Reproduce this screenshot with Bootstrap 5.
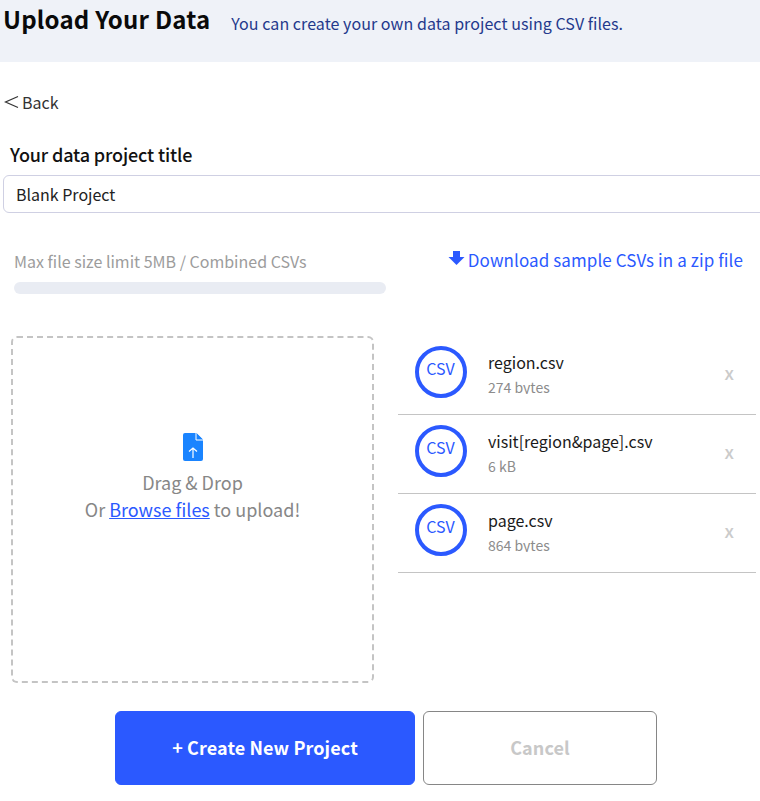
<!DOCTYPE html>
<html lang="en">

<head>
  <meta charset="UTF-8">
  <meta name="viewport" content="width=device-width, initial-scale=1.0">
  <title>Upload Your Data</title>
  <link href="https://cdn.jsdelivr.net/npm/bootstrap@5.3.0/dist/css/bootstrap.min.css" rel="stylesheet">
  <style>
    html, body { overflow: hidden; }
    body { font-family: "Noto Sans CJK KR", "Noto Sans", sans-serif; color: #111; height: 801px; }
    .page-head { background: #eff2f8; height: 62px; padding-left: 3px; gap: 21px; }
    .page-head h1 { font-size: 24px; font-weight: 700; line-height: 36px; margin: 1px 0 0; color: #0a0a0a; letter-spacing: .2px; }
    .page-head span { font-size: 16px; line-height: 24px; color: #24398c; margin-top: 11px; letter-spacing: .06px; }
    .back-link { font-size: 16px; line-height: 24px; color: #333; margin: 28px 0 0 4px; gap: 3px; }
    .title-label { font-size: 18px; font-weight: 500; line-height: 26px; margin: 27px 0 8px 10px; color: #111; letter-spacing: -.14px; }
    .title-input { margin-left: 3px; width: 800px; height: 38px; font-size: 16px; padding: 0 12px; border-color: #cfd0e3; border-radius: 6px; color: #222; }
    .limit-row { margin: 29px 17px 0 14px; }
    .limit-text { font-size: 16px; line-height: 24px; color: #9c9c9c; width: 372px; margin-top: 7px; }
    .limit-bar { height: 12px; width: 372px; background: #e9ecf3; margin-top: 9px; border-radius: 6px; }
    .sample-link { font-size: 17px; line-height: 26px; color: #2b59ff; text-decoration: none; gap: 3px; margin-top: 5px; letter-spacing: .09px; }
    .sample-link svg { margin: -3px 0 0 -1px; }
    .upload-area { margin: 42px 0 0 11px; }
    .drop-box { width: 363px; height: 347px; border: 2px dashed #c4c4c4; border-radius: 6px; color: #878787; font-size: 18px; line-height: 27px; padding-bottom: 64px; }
    .drop-box a { color: #2b59ff; }
    .file-list { margin-left: 24px; width: 358px; }
    .file-row { height: 79px; border-bottom: 1px solid #c4c4c4; padding-left: 17px; }
    .csv-ring { width: 52px; height: 52px; border: 4px solid #2b59ff; border-radius: 50%; color: #2b59ff; font-size: 16px; margin-top: 10px; flex-shrink: 0; padding: 0 1px 9px 0; }
    .file-info { margin-left: 21px; padding-top: 14px; }
    .file-name { font-size: 16px; line-height: 24px; color: #1a1a1a; }
    .file-size { font-size: 14px; line-height: 20px; color: #8c8c8c; margin-top: 3px; height: 17px; overflow: hidden; }
    .file-remove { margin-left: auto; margin-right: 22px; font-size: 18px; font-weight: 500; color: #cbcbcb; margin-top: 24px; line-height: 24px; }
    .btn-row { margin-top: 28px; padding-left: 115px; gap: 8px; }
    .btn-create, .btn-quit { height: 74px; font-size: 18px; font-weight: 700; border-radius: 6px; padding-bottom: 8px; letter-spacing: .1px; }
    .btn-create { width: 300px; background: #2b59ff; border-color: #2b59ff; color: #fff; }
    .btn-quit { width: 234px; background: #fff; border-color: #868686; color: #c8c8c8; }
  </style>
</head>

<body>
  <div class="page-head d-flex align-items-start">
    <h1>Upload Your Data</h1>
    <span>You can create your own data project using CSV files.</span>
  </div>

  <div class="back-link d-flex align-items-center">
    <svg width="15" height="14" viewBox="0 0 15 14" fill="none" stroke="#333" stroke-width="1.2"><path d="M14 1.5 1.5 7 14 12.5"/></svg>
    Back
  </div>

  <div class="title-label">Your data project title</div>
  <input class="form-control title-input" type="text" value="Blank Project">

  <div class="limit-row d-flex justify-content-between align-items-start">
    <div>
      <div class="limit-text">Max file size limit 5MB / Combined CSVs</div>
      <div class="limit-bar"></div>
    </div>
    <a class="sample-link d-flex align-items-center" href="#">
      <svg width="17" height="17" viewBox="0 0 17 17" fill="#2b59ff"><path d="M5 1h7v6h4.500L8.500 15 .5 7H5z"/></svg>
      Download sample CSVs in a zip file
    </a>
  </div>

  <div class="upload-area d-flex align-items-start">
    <div class="drop-box d-flex flex-column align-items-center justify-content-center text-center">
      <svg class="mb-2" width="20" height="28" viewBox="0 0 20 28">
        <path d="M2 0h11.500L20 6.500V26a2 2 0 0 1-2 2H2a2 2 0 0 1-2-2V2a2 2 0 0 1 2-2z" fill="#1a84ff"/>
        <path d="M13 0v7h7" fill="#1a84ff" stroke="#fff" stroke-width="1"/>
        <path d="M10 25V15M6 18.500 10 15l4 3.500" fill="none" stroke="#fff" stroke-width="1.200"/>
      </svg>
      <div>Drag &amp; Drop</div>
      <div>Or <a href="#">Browse files</a> to upload!</div>
    </div>

    <div class="file-list">
      <div class="file-row d-flex align-items-start">
        <div class="csv-ring d-flex align-items-center justify-content-center">CSV</div>
        <div class="file-info">
          <div class="file-name">region.csv</div>
          <div class="file-size">274 bytes</div>
        </div>
        <div class="file-remove">x</div>
      </div>
      <div class="file-row d-flex align-items-start">
        <div class="csv-ring d-flex align-items-center justify-content-center">CSV</div>
        <div class="file-info">
          <div class="file-name">visit[region&amp;page].csv</div>
          <div class="file-size">6 kB</div>
        </div>
        <div class="file-remove">x</div>
      </div>
      <div class="file-row d-flex align-items-start">
        <div class="csv-ring d-flex align-items-center justify-content-center">CSV</div>
        <div class="file-info">
          <div class="file-name">page.csv</div>
          <div class="file-size">864 bytes</div>
        </div>
        <div class="file-remove">x</div>
      </div>
    </div>
  </div>

  <div class="btn-row d-flex">
    <button class="btn btn-create" type="button">+ Create New Project</button>
    <button class="btn btn-quit" type="button">Cancel</button>
  </div>

  <script src="https://cdn.jsdelivr.net/npm/bootstrap@5.3.0/dist/js/bootstrap.bundle.min.js"></script>
</body>

</html>
